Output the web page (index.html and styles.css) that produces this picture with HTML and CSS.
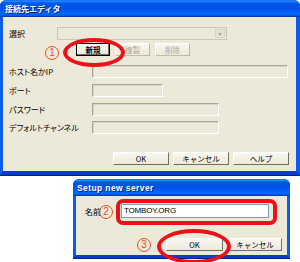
FILE: index.html
```html
<!DOCTYPE html>
<html lang="ja">
<head>
    <meta charset="UTF-8">
    <title>接続先エディタ</title>
    <link rel="stylesheet" href="styles.css">
</head>
<body>
    <div class="win main-win">
        <div class="title">接続先エディタ</div>
        <div class="body">
            <div class="row">
                <span class="lbl lbl-sel">選択</span>
                <div class="combo"><span class="arrow"></span></div>
            </div>
            <div class="row tools">
                <button class="btn btn-focus">新規</button>
                <button class="btn dis">複製</button>
                <button class="btn dis">削除</button>
            </div>
            <div class="row field host">
                <span class="lbl">ホスト名かIP</span>
                <div class="box w-host"></div>
            </div>
            <div class="row field">
                <span class="lbl">ポート</span>
                <div class="box w-port"></div>
            </div>
            <div class="row field">
                <span class="lbl">パスワード</span>
                <div class="box w-pass"></div>
            </div>
            <div class="row field last">
                <span class="lbl">デフォルトチャンネル</span>
                <div class="box w-pass"></div>
            </div>
            <div class="foot">
                <button class="btn wide">OK</button>
                <button class="btn wide">キャンセル</button>
                <button class="btn wide">ヘルプ</button>
            </div>
        </div>
    </div>

    <div class="win sub-win">
        <div class="title title-en">Setup new server</div>
        <div class="body">
            <div class="row name-row">
                <span class="lbl">名前</span>
                <div class="text-input">TOMBOY.ORG</div>
            </div>
            <div class="foot sub-foot">
                <button class="btn ok">OK</button>
                <button class="btn cancel">キャンセル</button>
            </div>
        </div>
    </div>

    <!-- 注釈 -->
    <span class="num n1">1</span>
    <span class="num n2">2</span>
    <span class="num n3">3</span>
    <span class="ring ring-new"></span>
    <span class="ring ring-ok"></span>
    <span class="ring-box"></span>
</body>
</html>
```

FILE: styles.css
```css
body {
    margin: 0;
    background: #fff;
    font-family: "Noto Sans CJK JP", "Liberation Sans", sans-serif;
    font-size: 8px;
    color: #000;
    position: relative;
    width: 300px;
    height: 262px;
    overflow: hidden;
}

.win {
    box-sizing: border-box;
    border: 3px solid #0b5ce8;
    border-top: none;
    border-bottom: 4px solid #0a3ccc;
    border-radius: 6px 6px 0 0;
    background: #ece9d8;
    box-shadow: 0 1px 0 #001e9c;
}

.main-win {
    width: 300px;
    border-right-width: 4px;
}

.sub-win {
    width: 217px;
    margin: 4px 0 0 73px;
    border-bottom-width: 3px;
}

.title {
    height: 17px;
    margin: 0 -4px 0 -3px;
    padding-left: 5px;
    border-radius: 6px 6px 0 0;
    background: linear-gradient(#0058ee 0%, #3593ff 6%, #127dff 10%, #0262ee 16%, #0054e3 26%, #0055eb 56%, #005bf5 66%, #026afe 78%, #0062ef 88%, #0052d6 93%, #0040ab 97%);
    color: #fff;
    font-weight: bold;
    font-size: 8px;
    line-height: 18px;
    text-shadow: 1px 1px 0 #0a1e80;
}

.sub-win .title {
    margin-right: -3px;
}

.title-en {
    font-family: "Liberation Sans", sans-serif;
    font-size: 8.5px;
    letter-spacing: 0.4px;
    padding-left: 4px;
}

.body {
    height: 154px;
    box-sizing: border-box;
    padding: 10px 7px 0 6px;
    font-feature-settings: "palt";
}

.row {
    display: flex;
    align-items: center;
    height: 13px;
}

.lbl {
    width: 83px;
    flex: none;
    font-size: 8px;
}

.lbl-sel {
    width: 48px;
}

.combo {
    width: 170px;
    height: 13px;
    box-sizing: border-box;
    border: 1px solid #c9c7ba;
    display: flex;
    justify-content: flex-end;
    padding: 1px;
}

.arrow {
    width: 10px;
    background: #e6e3d5;
    border: 1px solid #d6d3c4;
    box-sizing: border-box;
    position: relative;
}

.arrow::after {
    content: "";
    position: absolute;
    left: 2px;
    top: 3px;
    border: 2px solid transparent;
    border-top: 3px solid #aca899;
}

.tools {
    margin: 3px 0 0 67px;
    gap: 5px;
}

.btn {
    height: 13px;
    width: 34px;
    box-sizing: border-box;
    padding: 0;
    font-family: inherit;
    font-size: 7.5px;
    line-height: 11px;
    background: linear-gradient(#f8f7f2, #ece9d8);
    border: 1px solid;
    border-color: #fff #716f64 #716f64 #fff;
    color: #000;
}

.btn-focus {
    border: 1px solid #000;
    box-shadow: inset -1px -1px 0 #716f64, inset 1px 1px 0 #fff;
    font-weight: bold;
}

.dis {
    color: #aca899;
    border-color: #fff #bdbab0 #bdbab0 #fff;
    width: 35px;
}

.field {
    margin-top: 6px;
}

.host {
    margin-top: 9px;
}

.last {
    margin-top: 5px;
}

.box {
    height: 13px;
    box-sizing: border-box;
    border: 1px solid;
    border-color: #a7a596 #fff #fff #a7a596;
    box-shadow: inset 1px 1px 0 #d8d5c6;
}

.w-host { width: 196px; }
.w-port { width: 71px; }
.w-pass { width: 127px; }

.foot {
    display: flex;
    justify-content: flex-end;
    gap: 4px;
    margin-top: 18px;
}

.wide {
    width: 56px;
}

.sub-win .body {
    height: 59px;
    padding: 8px 5px 0 9px;
}

.name-row {
    height: 14px;
}

.name-row .lbl {
    width: 36px;
}

.text-input {
    width: 148px;
    height: 14px;
    box-sizing: border-box;
    border: 1px solid #7f9db9;
    background: #fff;
    font-family: "Liberation Sans", sans-serif;
    font-size: 8px;
    line-height: 12px;
    padding-left: 2px;
    letter-spacing: -0.2px;
}

.sub-foot {
    margin-top: 20px;
    gap: 5px;
}

.ok { width: 57px; }
.cancel { width: 54px; }

.num {
    position: absolute;
    width: 12px;
    height: 12px;
    border: 1.5px solid #e8501e;
    border-radius: 50%;
    color: #e8501e;
    font-family: "Liberation Sans", sans-serif;
    font-size: 10px;
    line-height: 12px;
    text-align: center;
}

.n1 { left: 45px; top: 46px; }
.n2 { left: 99px; top: 205px; }
.n3 { left: 137px; top: 238px; }

.ring {
    position: absolute;
    box-sizing: border-box;
    border: 4px solid #ec1018;
    border-radius: 50%;
}

.ring-new {
    left: 63px;
    top: 38px;
    width: 62px;
    height: 29px;
}

.ring-ok {
    left: 157px;
    top: 229px;
    width: 74px;
    height: 35px;
}

.ring-box {
    position: absolute;
    left: 116px;
    top: 199px;
    width: 161px;
    height: 26px;
    box-sizing: border-box;
    border: 4px solid #ec1018;
    border-radius: 7px;
}
```
